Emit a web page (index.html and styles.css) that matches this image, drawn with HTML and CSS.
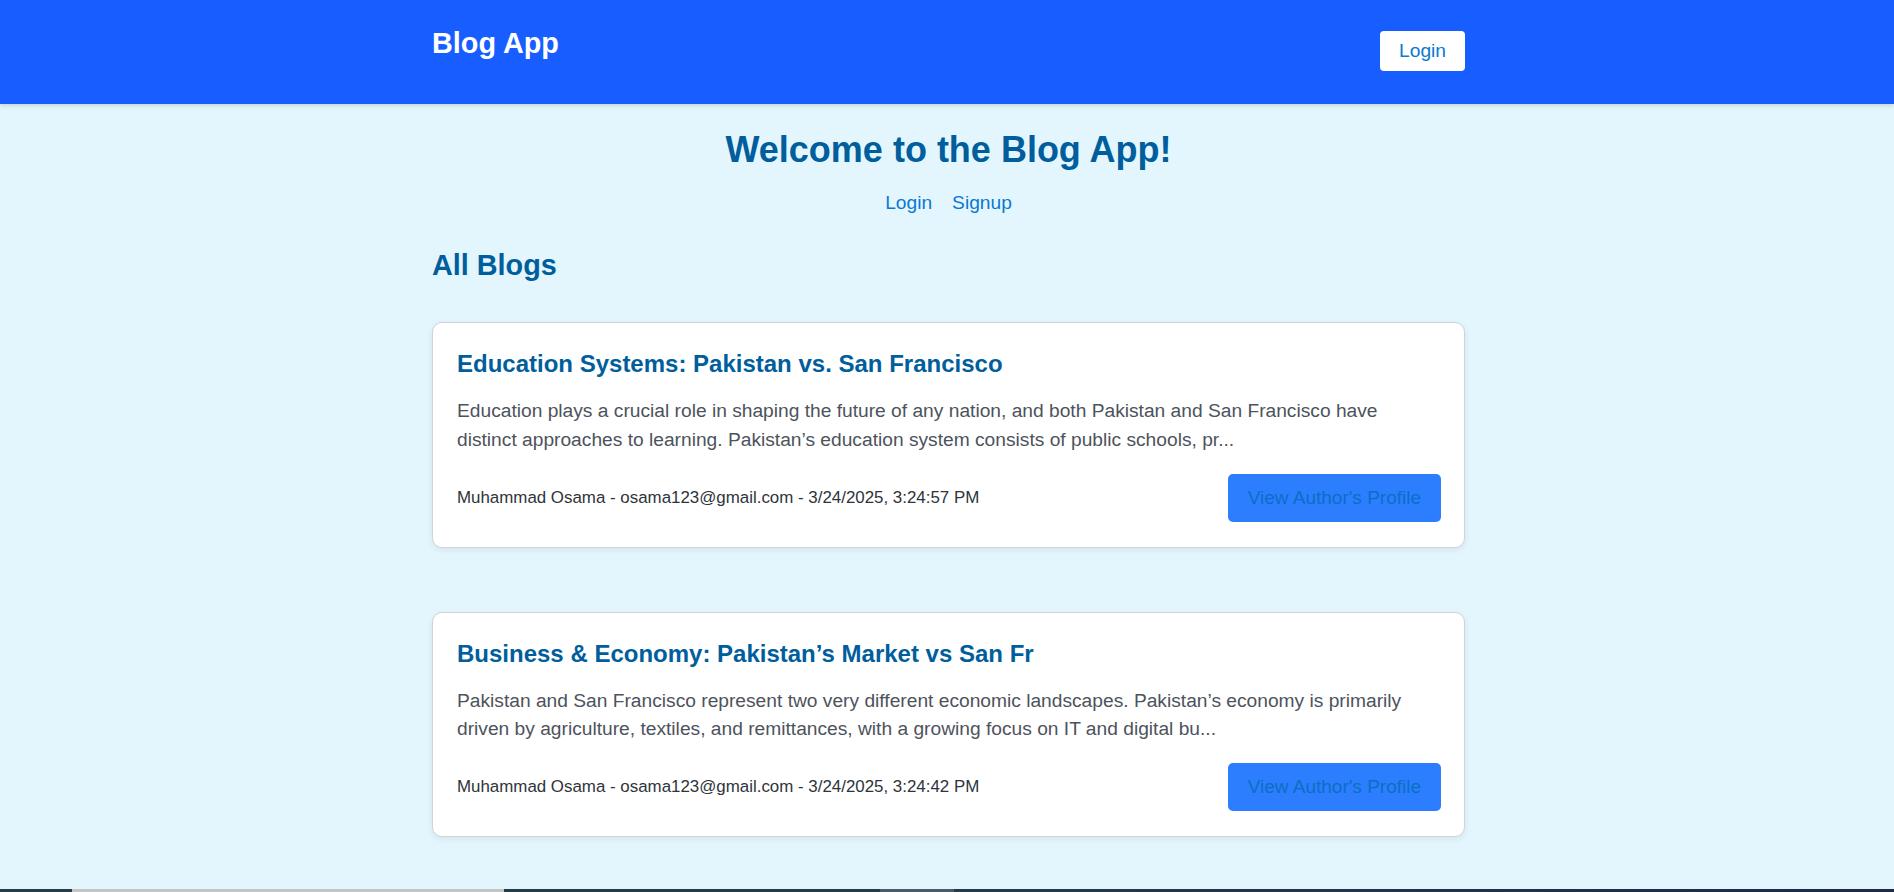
FILE: index.html
```html
<!DOCTYPE html>
<html lang="en">
<head>
<meta charset="utf-8">
<title>Blog App</title>
<link rel="stylesheet" href="styles.css">
</head>
<body>
<header class="topbar">
  <div class="topbar-inner">
    <h1 class="brand">Blog App</h1>
    <button class="login-btn">Login</button>
  </div>
</header>
<main class="page">
  <h1 class="welcome">Welcome to the Blog App!</h1>
  <nav class="auth-links">
    <a href="#">Login</a>
    <a href="#">Signup</a>
  </nav>
  <h2 class="section-title">All Blogs</h2>
  <div class="blog-list">
    <article class="card">
      <h3 class="card-title">Education Systems: Pakistan vs. San Francisco</h3>
      <p class="card-text">Education plays a crucial role in shaping the future of any nation, and both Pakistan and San Francisco have distinct approaches to learning. Pakistan’s education system consists of public schools, pr...</p>
      <div class="card-footer">
        <span class="meta">Muhammad Osama - osama123@gmail.com - 3/24/2025, 3:24:57 PM</span>
        <button class="profile-btn">View Author's Profile</button>
      </div>
    </article>
    <article class="card">
      <h3 class="card-title">Business &amp; Economy: Pakistan’s Market vs San Fr</h3>
      <p class="card-text">Pakistan and San Francisco represent two very different economic landscapes. Pakistan’s economy is primarily driven by agriculture, textiles, and remittances, with a growing focus on IT and digital bu...</p>
      <div class="card-footer">
        <span class="meta">Muhammad Osama - osama123@gmail.com - 3/24/2025, 3:24:42 PM</span>
        <button class="profile-btn">View Author's Profile</button>
      </div>
    </article>
  </div>
</main>
<div class="taskbar-strip"></div>
</body>
</html>
```

FILE: styles.css
```css
* { box-sizing: border-box; }

html, body {
  margin: 0;
  padding: 0;
  height: 100%;
  overflow: hidden;
}

body {
  background: #e3f6fe;
  font-family: "Liberation Sans", Arial, sans-serif;
}

.topbar {
  height: 104px;
  background: #175dff;
  box-shadow: 0 2px 4px rgba(0, 0, 0, 0.12);
}

.topbar-inner {
  width: 1033px;
  margin-left: calc(50% - 515px);
  padding-top: 27px;
  display: flex;
  justify-content: space-between;
  align-items: flex-start;
}

.brand {
  margin: 0;
  font-size: 28.8px;
  line-height: 33px;
  font-weight: bold;
  color: #ffffff;
}

.login-btn {
  margin-top: 4px;
  height: 40px;
  padding: 0 19px;
  border: none;
  border-radius: 4px;
  background: #ffffff;
  color: #0a78d1;
  font-family: inherit;
  font-size: 19.2px;
}

.page {
  width: 1033px;
  margin-left: calc(50% - 515px);
  padding-top: 25px;
  display: flex;
  flex-direction: column;
}

.welcome {
  margin: 0;
  text-align: center;
  font-size: 36px;
  line-height: 41px;
  color: #005e9c;
}

.auth-links {
  margin-top: 22px;
  display: flex;
  justify-content: center;
  gap: 20px;
  font-size: 19.2px;
  line-height: 22px;
}

.auth-links a {
  color: #0a78d1;
  text-decoration: none;
}

.section-title {
  margin: 35px 0 0;
  font-size: 28.8px;
  line-height: 33px;
  color: #005e9c;
}

.blog-list {
  margin-top: 40px;
  display: flex;
  flex-direction: column;
  gap: 64px;
}

.card {
  background: #ffffff;
  border: 1px solid #cfd4d8;
  border-radius: 10px;
  padding: 27px 23px 25px 24px;
  box-shadow: 0 2px 6px rgba(0, 0, 0, 0.08);
  display: flex;
  flex-direction: column;
}

.card-title {
  margin: 0;
  font-size: 24px;
  line-height: 28px;
  color: #005e9c;
}

.card-text {
  margin: 19px 0 0;
  padding-right: 8px;
  font-size: 19.2px;
  line-height: 28.8px;
  color: #4d535c;
}

.card-footer {
  margin-top: 19px;
  display: flex;
  justify-content: space-between;
  align-items: center;
}

.meta {
  font-size: 16.9px;
  color: #2e343a;
}

.profile-btn {
  height: 48px;
  padding: 0 20px;
  border: none;
  border-radius: 5px;
  background: #2d7eff;
  color: #0a6fc4;
  font-family: inherit;
  font-size: 19px;
}

.taskbar-strip {
  position: fixed;
  left: 0;
  right: 0;
  bottom: 0;
  height: 3px;
  background: linear-gradient(to right,
    #263d48 0, #263d48 72px,
    #c4c4c4 72px, #c4c4c4 504px,
    #243b48 504px, #243b48 880px,
    #4b5c68 880px, #4b5c68 954px,
    #243a48 954px, #1e2a48 100%);
}
```
